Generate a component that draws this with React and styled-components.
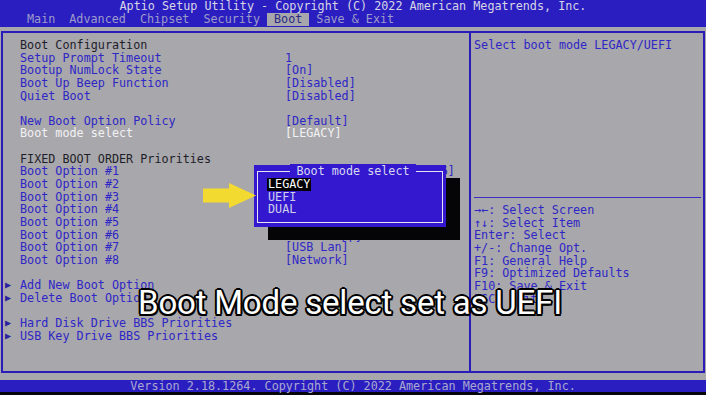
import React from 'react'
import styled, { createGlobalStyle } from 'styled-components'

const GlobalStyle = createGlobalStyle`
  html, body {
    margin: 0;
    padding: 0;
    background: #a8a7ab;
  }
  body {
    width: 706px;
    height: 395px;
    overflow: hidden;
  }
`

const BLUE = '#2b1ec0'
const INK = '#2f26c6'

const Screen = styled.div`
  position: relative;
  width: 706px;
  height: 395px;
  display: flex;
  flex-direction: column;
  background: #a8a7ab;
  font-family: "DejaVu Sans Mono", "Liberation Mono", monospace;
  font-size: 11.75px;
  line-height: 12.65px;
  white-space: pre;
`

const Header = styled.div`
  height: 27px;
  background: ${BLUE};
`

const TitleRow = styled.div`
  height: 13px;
  line-height: 13px;
  text-align: center;
  color: #d6d6e6;
`

const TabRow = styled.div`
  display: flex;
  height: 13px;
  padding-left: 20px;
`

const Tab = styled.span`
  padding: 0 7px;
  line-height: 13px;
  color: ${p => (p.$active ? '#2a2a86' : '#9c9cca')};
  background: ${p => (p.$active ? '#a8a7ab' : 'transparent')};
`

const Body = styled.div`
  flex: 1;
  display: flex;
  padding: 4px 1px 7px 1px;
`

const Frame = styled.div`
  flex: 1;
  display: grid;
  grid-template-columns: 468px 1fr;
  border: 2px solid #2a1cb8;
`

const LeftPanel = styled.div`
  box-sizing: border-box;
  border-right: 2px solid #2a1cb8;
  padding: 6px 0 0 2px;
`

const Row = styled.div`
  display: grid;
  grid-template-columns: 15px 265px 1fr;
  height: 12.65px;
  color: ${p =>
    p.$kind === 'head' ? '#1e1e2a' : p.$kind === 'sel' ? '#f2f2f4' : INK};
`

const Marker = styled.span`
  font-size: 10px;
  color: #2a229e;
`

const Gap = styled.div`
  height: 12.65px;
`

const RightPanel = styled.div`
  display: flex;
  flex-direction: column;
  padding: 6px 2px 0 3px;
  color: ${INK};
`

const Desc = styled.div`
  height: 158px;
`

const Rule = styled.div`
  height: 1px;
  background: #3a2fc0;
`

const Help = styled.div`
  padding-top: 6px;
`

const Footer = styled.div`
  height: 12px;
  line-height: 12px;
  text-align: center;
  background: ${BLUE};
  color: #a9a9cf;
  border-bottom: 3px solid #06060c;
`

const Popup = styled.div`
  position: absolute;
  left: 254px;
  top: 165px;
  width: 192px;
  height: 62px;
  box-sizing: border-box;
  padding: 13px 0 0 13px;
  background: #3318d0;
  box-shadow: 14px 13px 0 #050508;
  color: #cfcfe8;
`

const PopupFrame = styled.div`
  position: absolute;
  top: 6px;
  left: 3px;
  right: 3px;
  bottom: 4px;
  border: 1px solid #e4e4f2;
`

const PopupTitle = styled.div`
  position: absolute;
  top: 0;
  left: 6px;
  right: 0;
  text-align: center;
  line-height: 13px;
  span {
    padding: 0 6px;
    background: #3318d0;
    color: #d8d8ee;
  }
`

const Choice = styled.div`
  position: relative;
  width: fit-content;
  padding: 0 1px;
  background: ${p => (p.$active ? '#000' : 'transparent')};
  color: ${p => (p.$active ? '#fff' : '#cfcfe8')};
`

const Pointer = styled.svg`
  position: absolute;
  left: 203px;
  top: 183px;
`

const Caption = styled.div`
  position: absolute;
  left: 0;
  top: 283px;
  width: 700px;
  text-align: center;
  font-family: Roboto, "Noto Sans", sans-serif;
  font-size: 33px;
  letter-spacing: -0.2px;
  line-height: 40px;
  color: #fff;
  white-space: nowrap;
  text-shadow:
    2px 0 0 #000, -2px 0 0 #000, 0 2px 0 #000, 0 -2px 0 #000,
    1.5px 1.5px 0 #000, -1.5px 1.5px 0 #000, 1.5px -1.5px 0 #000, -1.5px -1.5px 0 #000;
`

const tabs = ['Main', 'Advanced', 'Chipset', 'Security', 'Boot', 'Save & Exit']

const rows = [
  { kind: 'head', label: 'Boot Configuration' },
  { label: 'Setup Prompt Timeout', value: '1' },
  { label: 'Bootup NumLock State', value: '[On]' },
  { label: 'Boot Up Beep Function', value: '[Disabled]' },
  { label: 'Quiet Boot', value: '[Disabled]' },
  { kind: 'gap' },
  { label: 'New Boot Option Policy', value: '[Default]' },
  { kind: 'sel', label: 'Boot mode select', value: '[LEGACY]' },
  { kind: 'gap' },
  { kind: 'head', label: 'FIXED BOOT ORDER Priorities' },
  { label: 'Boot Option #1', value: '[Hard Disk:SATA SSD 256]' },
  { label: 'Boot Option #2', value: '[CD/DVD]' },
  { label: 'Boot Option #3', value: '[SD]' },
  { label: 'Boot Option #4', value: '[USB Hard Disk]' },
  { label: 'Boot Option #5', value: '[USB CD/DVD]' },
  { label: 'Boot Option #6', value: '[USB Floppy]' },
  { label: 'Boot Option #7', value: '[USB Lan]' },
  { label: 'Boot Option #8', value: '[Network]' },
  { kind: 'gap' },
  { kind: 'sub', label: 'Add New Boot Option' },
  { kind: 'sub', label: 'Delete Boot Option' },
  { kind: 'gap' },
  { kind: 'sub', label: 'Hard Disk Drive BBS Priorities' },
  { kind: 'sub', label: 'USB Key Drive BBS Priorities' },
]

const help = [
  '→←: Select Screen',
  '↑↓: Select Item',
  'Enter: Select',
  '+/-: Change Opt.',
  'F1: General Help',
  'F9: Optimized Defaults',
  'F10: Save & Exit',
  'ESC: Exit',
]

export default function App() {
  return (
    <Screen>
      <GlobalStyle />
      <Header>
        <TitleRow>Aptio Setup Utility - Copyright (C) 2022 American Megatrends, Inc.</TitleRow>
        <TabRow>
          {tabs.map(t => (
            <Tab key={t} $active={t === 'Boot'}>{t}</Tab>
          ))}
        </TabRow>
      </Header>

      <Body>
        <Frame>
          <LeftPanel>
            {rows.map((r, i) =>
              r.kind === 'gap' ? (
                <Gap key={i} />
              ) : (
                <Row key={i} $kind={r.kind}>
                  <Marker>{r.kind === 'sub' ? '▶' : ''}</Marker>
                  <span>{r.label}</span>
                  <span>{r.value || ''}</span>
                </Row>
              )
            )}
          </LeftPanel>
          <RightPanel>
            <Desc>Select boot mode LEGACY/UEFI</Desc>
            <Rule />
            <Help>
              {help.map(h => (
                <div key={h}>{h}</div>
              ))}
            </Help>
          </RightPanel>
        </Frame>
      </Body>

      <Footer>Version 2.18.1264. Copyright (C) 2022 American Megatrends, Inc.</Footer>

      <Popup>
        <PopupFrame />
        <PopupTitle><span>Boot mode select</span></PopupTitle>
        <Choice $active>LEGACY</Choice>
        <Choice>UEFI</Choice>
        <Choice>DUAL</Choice>
      </Popup>

      <Pointer width="54" height="25" viewBox="0 0 54 25">
        <polygon points="0,5.5 26,5.5 26,0 53,12.5 26,25 26,19.5 0,19.5" fill="#f3da30" />
      </Pointer>

      <Caption>Boot Mode select set as UEFI</Caption>
    </Screen>
  )
}
